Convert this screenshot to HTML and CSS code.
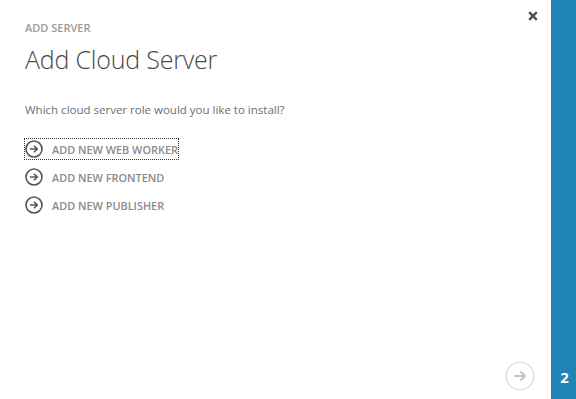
FILE: index.html
```html
<!DOCTYPE html>
<html lang="en">
<head>
    <meta charset="UTF-8">
    <title>Add Cloud Server</title>
    <link rel="stylesheet" href="styles.css">
</head>
<body>
    <div class="dialog">
        <div class="content">
            <a class="close" href="#" title="Close"><svg width="10" height="10" viewBox="0 0 10 10"><path d="M1.2 1.2l7.6 7.6M8.8 1.2L1.2 8.8" stroke="#4d4d4d" stroke-width="2.4"/></svg></a>
            <h2 class="eyebrow">ADD SERVER</h2>
            <h1>Add Cloud Server</h1>
            <p class="question">Which cloud server role would you like to install?</p>
            <ul class="roles">
                <li><a href="#" class="role focused"><svg width="18" height="18" viewBox="0 0 18 18"><circle cx="9" cy="9" r="8" fill="none" stroke="#555" stroke-width="1.6"/><path d="M4.8 9h7.4M9 5.8L12.2 9 9 12.2" fill="none" stroke="#555" stroke-width="1.6"/></svg><span>ADD NEW WEB WORKER</span></a></li>
                <li><a href="#" class="role"><svg width="18" height="18" viewBox="0 0 18 18"><circle cx="9" cy="9" r="8" fill="none" stroke="#555" stroke-width="1.6"/><path d="M4.8 9h7.4M9 5.8L12.2 9 9 12.2" fill="none" stroke="#555" stroke-width="1.6"/></svg><span>ADD NEW FRONTEND</span></a></li>
                <li><a href="#" class="role"><svg width="18" height="18" viewBox="0 0 18 18"><circle cx="9" cy="9" r="8" fill="none" stroke="#555" stroke-width="1.6"/><path d="M4.8 9h7.4M9 5.8L12.2 9 9 12.2" fill="none" stroke="#555" stroke-width="1.6"/></svg><span>ADD NEW PUBLISHER</span></a></li>
            </ul>
            <div class="footer">
                <button class="next" disabled>
                    <svg width="30" height="30" viewBox="0 0 30 30"><circle cx="15" cy="15" r="13.8" fill="none" stroke="#e3e3e3" stroke-width="1.6"/><path d="M9 15h11M15.5 10.5L20 15l-4.5 4.5" fill="none" stroke="#c4c4c4" stroke-width="2"/></svg>
                </button>
            </div>
        </div>
        <div class="steps">
            <span class="step">2</span>
        </div>
    </div>
</body>
</html>
```

FILE: styles.css
```css
* {
    box-sizing: border-box;
    margin: 0;
    padding: 0;
}
body {
    font-family: 'Open Sans', 'Liberation Sans', sans-serif;
    background-color: #ffffff;
    width: 576px;
    height: 399px;
    overflow: hidden;
}
.dialog {
    display: flex;
    height: 399px;
}
.content {
    flex: 1;
    position: relative;
    padding: 20px 0 0 25px;
    display: flex;
    flex-direction: column;
}
.close {
    position: absolute;
    top: 11px;
    right: 13px;
    line-height: 0;
}
.eyebrow {
    font-size: 11px;
    font-weight: 600;
    color: #9a9a9a;
    line-height: 15px;
}
h1 {
    font-size: 25px;
    font-weight: 300;
    color: #4a4a4a;
    line-height: 34px;
    margin-top: 7px;
    letter-spacing: -0.2px;
}
.question {
    font-size: 11.5px;
    color: #6e6e6e;
    margin-top: 26px;
    line-height: 16px;
}
.roles {
    list-style: none;
    margin-top: 21px;
}
.roles li {
    height: 28px;
}
.role {
    display: inline-flex;
    align-items: center;
    gap: 9px;
    height: 20px;
    color: #8a8a8a;
    text-decoration: none;
    font-size: 10.9px;
    font-weight: 600;
}
.role svg {
    flex: none;
}
.role.focused {
    outline: 1px dotted #333333;
}
.footer {
    margin-top: auto;
    display: flex;
    justify-content: flex-end;
    padding: 0 16px 8px 0;
}
.next {
    background: none;
    border: none;
    width: 30px;
    height: 30px;
}
.steps {
    width: 25px;
    background-color: #1f85b7;
    display: flex;
    flex-direction: column;
    justify-content: flex-end;
    align-items: center;
    padding: 0 0 12px 2px;
}
.step {
    color: #ffffff;
    font-size: 15px;
    font-weight: 700;
}
```
